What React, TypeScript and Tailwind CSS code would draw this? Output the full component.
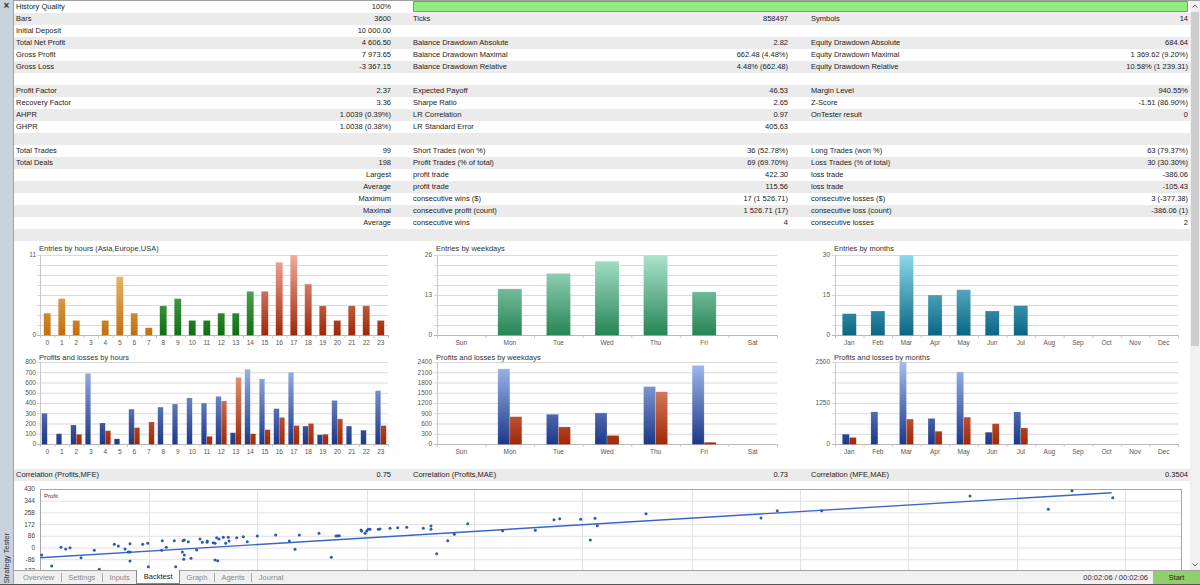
import React from "react";

const FONT = "'Liberation Sans', Arial, sans-serif";

type Row = [string, string, string, string, string, string];
const rows: Row[] = [
  ["Bars", "3600", "Ticks", "858497", "Symbols", "14"],
  ["Initial Deposit", "10 000.00", "", "", "", ""],
  ["Total Net Profit", "4 606.50", "Balance Drawdown Absolute", "2.82", "Equity Drawdown Absolute", "684.64"],
  ["Gross Profit", "7 973.65", "Balance Drawdown Maximal", "662.48 (4.48%)", "Equity Drawdown Maximal", "1 369.62 (9.20%)"],
  ["Gross Loss", "-3 367.15", "Balance Drawdown Relative", "4.48% (662.48)", "Equity Drawdown Relative", "10.58% (1 239.31)"],
  ["", "", "", "", "", ""],
  ["Profit Factor", "2.37", "Expected Payoff", "46.53", "Margin Level", "940.55%"],
  ["Recovery Factor", "3.36", "Sharpe Ratio", "2.65", "Z-Score", "-1.51 (86.90%)"],
  ["AHPR", "1.0039 (0.39%)", "LR Correlation", "0.97", "OnTester result", "0"],
  ["GHPR", "1.0038 (0.38%)", "LR Standard Error", "405.63", "", ""],
  ["", "", "", "", "", ""],
  ["Total Trades", "99", "Short Trades (won %)", "36 (52.78%)", "Long Trades (won %)", "63 (79.37%)"],
  ["Total Deals", "198", "Profit Trades (% of total)", "69 (69.70%)", "Loss Trades (% of total)", "30 (30.30%)"],
  ["", "Largest", "profit trade", "422.30", "loss trade", "-386.06"],
  ["", "Average", "profit trade", "115.56", "loss trade", "-105.43"],
  ["", "Maximum", "consecutive wins ($)", "17 (1 526.71)", "consecutive losses ($)", "3 (-377.38)"],
  ["", "Maximal", "consecutive profit (count)", "1 526.71 (17)", "consecutive loss (count)", "-386.06 (1)"],
  ["", "Average", "consecutive wins", "4", "consecutive losses", "2"],
  ["", "", "", "", "", ""],
];

function Cell({ a, b }: { a: string; b: string }) {
  return (
    <div className="flex justify-between whitespace-nowrap">
      <span>{a}</span>
      <span>{b}</span>
    </div>
  );
}

function DataRow({ r, gray }: { r: Row; gray: boolean }) {
  return (
    <div
      className={`grid grid-cols-[375px_22px_375px_23px_377px] pl-[2px] h-[12px] leading-[12px] text-[7.5px] ${
        gray ? "bg-[#ebebeb]" : "bg-white"
      }`}
    >
      <Cell a={r[0]} b={r[1]} />
      <div />
      <Cell a={r[2]} b={r[3]} />
      <div />
      <Cell a={r[4]} b={r[5]} />
    </div>
  );
}

type Grad = { id: string; top: string; bot: string };

interface ChartProps {
  w: number;
  h: number;
  title: string;
  ty: number;
  l: number;
  r: number;
  t: number;
  b: number;
  max: number;
  lx: number;
  yLabels: [string, number][];
  cats: string[];
  series: number[][];
  bw: number;
  grads: Grad[];
  fill: (s: number, i: number) => string;
}

function Chart(p: ChartProps) {
  const cw = (p.r - p.l) / p.cats.length;
  const y = (v: number) => p.b - (v / p.max) * (p.b - p.t);
  const grid = Array.from({ length: 9 }, (_, k) => p.t + (k * (p.b - p.t)) / 8);
  return (
    <svg width={p.w} height={p.h} className="block" style={{ fontFamily: FONT }}>
      <defs>
        {p.grads.map((g) => (
          <linearGradient key={g.id} id={g.id} gradientUnits="userSpaceOnUse" x1="0" y1={p.t} x2="0" y2={p.b}>
            <stop offset="0" stopColor={g.top} />
            <stop offset="1" stopColor={g.bot} />
          </linearGradient>
        ))}
      </defs>
      <text x={p.l - 1} y={p.ty} fontSize="7.5" fill="#333">
        {p.title}
      </text>
      {grid.map((gy, k) => (
        <line key={k} x1={p.l - 3} x2={p.r} y1={gy + 0.5} y2={gy + 0.5} stroke={k === 8 ? "#b8b8b8" : "#d9d9d9"} strokeWidth="1" />
      ))}
      <line x1={p.l + 0.5} x2={p.l + 0.5} y1={p.t} y2={p.b + 3} stroke="#c8c8c8" />
      {p.cats.map((_, i) => (
        <line key={i} x1={p.l + cw * (i + 1) + 0.5} x2={p.l + cw * (i + 1) + 0.5} y1={p.b} y2={p.b + 3} stroke="#c8c8c8" />
      ))}
      {p.yLabels.map(([s, v]) => (
        <text key={s} x={p.lx} y={y(v) + 2.4} fontSize="6.5" fill="#555" textAnchor="end">
          {s}
        </text>
      ))}
      {p.cats.map((c, i) => (
        <text key={c} x={p.l + cw * (i + 0.5)} y={p.b + 10} fontSize="6.5" fill="#555" textAnchor="middle">
          {c}
        </text>
      ))}
      {p.series.map((vals, s) =>
        vals.map((v, i) => {
          if (v <= 0) return null;
          const c = p.l + cw * (i + 0.5);
          const x = p.series.length === 1 ? c - p.bw / 2 : s === 0 ? c - p.bw : c;
          const top = y(v);
          return (
            <rect
              key={`${s}-${i}`}
              x={x}
              y={top}
              width={p.bw}
              height={p.b - top + 0.5}
              fill={`url(#${p.fill(s, i)})`}
              stroke="rgba(255,255,255,0.35)"
              strokeWidth="0.5"
            />
          );
        })
      )}
    </svg>
  );
}

const hours = Array.from({ length: 24 }, (_, i) => String(i));
const days = ["Sun", "Mon", "Tue", "Wed", "Thu", "Fri", "Sat"];
const months = ["Jan", "Feb", "Mar", "Apr", "May", "Jun", "Jul", "Aug", "Sep", "Oct", "Nov", "Dec"];

const blue = (id: string): Grad => ({ id, top: "#a4bcee", bot: "#1c3888" });
const red = (id: string): Grad => ({ id, top: "#f2a688", bot: "#a02808" });

const pts: [number, number][] = [
  [41.7, 555], [51.7, 566], [61, 547.3], [65.7, 549], [70, 547.7], [81, 557.7], [94.3, 550.3], [99.3, 569.3],
  [114.3, 544.3], [118.3, 546], [125, 549], [128.3, 552], [130, 543.7], [130, 552], [130, 561], [142.7, 544.3],
  [147.7, 543.3], [148.3, 566.7], [161.7, 550.3], [162.3, 540.7], [166.3, 547.3], [174.3, 540.7], [175.7, 566.7],
  [182.3, 552], [183, 540.7], [184.3, 540], [184.3, 555], [183.7, 559.3], [188.3, 541.7], [191, 558.3],
  [196.7, 550], [200, 539], [202.3, 542.3], [207, 542.3], [207.3, 541], [213.3, 542.7], [215, 543.3], [215, 560],
  [217.7, 560.7], [216.7, 537.7], [219, 539], [223.3, 537.3], [225.7, 543.3], [228.3, 537.3], [229, 541],
  [236.7, 537.7], [243.3, 536.7], [247.3, 541.7], [257.3, 536], [275.7, 535], [289.3, 541], [295, 549.3],
  [299.3, 535], [319, 533.3], [331.3, 557.3], [336, 536], [337.7, 535.7], [339.3, 535.7], [361, 530],
  [361.7, 531], [365, 533.3], [366.7, 531], [368.3, 529.3], [370, 529.3], [378.3, 529.3], [380, 529],
  [390, 528.3], [397.7, 527.7], [406.7, 527.3], [423.3, 528.3], [431, 526], [431, 529.3], [436.7, 553.7],
  [447.7, 540.7], [454.3, 534.3], [467.7, 523.7], [502.7, 530.7], [535.3, 530.3], [554, 519.7], [559.7, 518.7],
  [580.7, 519.3], [590.3, 540], [595, 518.3], [597.3, 525.7], [646, 513.7], [761, 518], [777.3, 510.7],
  [821.7, 510.7], [970, 496], [1048.3, 509.3], [1072, 490.7], [1112.7, 497.7],
];

function Scatter() {
  const ox = 14;
  const oy = 481;
  const top = 8;
  const step = 11.7;
  const labels = ["430", "344", "258", "172", "86", "0", "-86", "-172"];
  const vlines = [149, 257, 367, 474, 582, 692, 800, 908, 1017, 1125];
  return (
    <svg width={1176} height={89} className="block" style={{ fontFamily: FONT }}>
      {labels.map((s, k) => (
        <line key={`h${k}`} x1={26} x2={1168} y1={top + k * step + 0.5} y2={top + k * step + 0.5} stroke="#e2e2e2" />
      ))}
      {vlines.map((x) => (
        <line key={`v${x}`} x1={x - ox + 0.5} x2={x - ox + 0.5} y1={top} y2={100} stroke="#e2e2e2" />
      ))}
      <rect x={26.5} y={top + 0.5} width={1141} height={100} fill="none" stroke="#a8a8a8" />
      {labels.map((s, k) => (
        <text key={s} x={21} y={top + k * step + 2.4} fontSize="6.5" fill="#444" textAnchor="end">
          {s}
        </text>
      ))}
      <text x={30} y={16.5} fontSize="6" fill="#333">
        Profit
      </text>
      <line x1={26} y1={557.7 - oy} x2={1111.7 - ox} y2={492.7 - oy} stroke="#3a66c8" strokeWidth="1.4" />
      {pts.map(([x, yy], i) => (
        <circle key={i} cx={x - ox} cy={yy - oy} r={1.5} fill="#2c58b8" />
      ))}
    </svg>
  );
}

function Tab({ children }: { children: React.ReactNode }) {
  return <span className="px-[6.5px] text-[#8a8a8a]">{children}</span>;
}
function Sep() {
  return <span className="w-px h-[9px] bg-[#a8a8a8]" />;
}

export default function App() {
  return (
    <div
      className="w-[1200px] h-[585px] flex flex-col border-b border-[#555] overflow-hidden bg-white text-[#222]"
      style={{ fontFamily: FONT }}
    >
      <div className="flex flex-1 min-h-0">
        {/* left strip */}
        <div className="w-[14px] h-full bg-[#c9d3de] border-r border-[#95a3b3] flex flex-col items-center justify-between">
          <span className="text-[10px] leading-[12px] font-bold text-[#333]">×</span>
          <span className="[writing-mode:vertical-rl] rotate-180 text-[7.5px] leading-[12px] text-[#333] mb-[1px] whitespace-nowrap">
            Strategy Tester
          </span>
        </div>

        <div className="flex flex-col w-[1186px]">
          <div className="flex h-[570px] border-t border-[#a0a0a0]">
            <div className="w-[1176px] overflow-hidden flex flex-col">
              {/* row 0 */}
              <div className="grid grid-cols-[375px_22px_775px] pl-[2px] h-[12px] leading-[12px] text-[7.5px] bg-white">
                <Cell a="History Quality" b="100%" />
                <div />
                <div className="h-[11px] bg-[#90ee80] border border-[#7d9d78]" />
              </div>
              {rows.map((r, i) => (
                <DataRow key={i} r={r} gray={i % 2 === 0} />
              ))}

              {/* charts */}
              <div className="grid grid-cols-[386px_395px_395px] grid-rows-[109px_119px] h-[228px] bg-white">
                <Chart
                  w={386}
                  h={109}
                  title="Entries by hours (Asia,Europe,USA)"
                  ty={10}
                  l={26}
                  r={374}
                  t={14}
                  b={94}
                  max={11}
                  lx={22}
                  yLabels={[["11", 11], ["0", 0]]}
                  cats={hours}
                  series={[[3, 5, 2, 0, 2, 8, 3, 1, 4, 5, 2, 2, 3, 3, 6, 6, 10, 11, 7, 4, 2, 4, 4, 2]]}
                  bw={7}
                  grads={[
                    { id: "eo", top: "#f8cc86", bot: "#c07010" },
                    { id: "eg", top: "#7fcc7f", bot: "#0f6e12" },
                    { id: "er", top: "#f4aa9a", bot: "#a02808" },
                  ]}
                  fill={(_, i) => (i < 8 ? "eo" : i < 15 ? "eg" : "er")}
                />
                <Chart
                  w={395}
                  h={109}
                  title="Entries by weekdays"
                  ty={10}
                  l={37}
                  r={377}
                  t={14}
                  b={94}
                  max={26}
                  lx={32}
                  yLabels={[["26", 26], ["13", 13], ["0", 0]]}
                  cats={days}
                  series={[[0, 15, 20, 24, 26, 14, 0]]}
                  bw={24}
                  grads={[{ id: "wg", top: "#acE4cc", bot: "#278555" }]}
                  fill={() => "wg"}
                />
                <Chart
                  w={395}
                  h={109}
                  title="Entries by months"
                  ty={10}
                  l={40}
                  r={383}
                  t={14}
                  b={94}
                  max={30}
                  lx={35}
                  yLabels={[["30", 30], ["15", 15], ["0", 0]]}
                  cats={months}
                  series={[[8, 9, 30, 15, 17, 9, 11, 0, 0, 0, 0, 0]]}
                  bw={14}
                  grads={[{ id: "mt", top: "#8cd8ea", bot: "#0a6684" }]}
                  fill={() => "mt"}
                />
                <Chart
                  w={386}
                  h={119}
                  title="Profits and losses by hours"
                  ty={9.5}
                  l={26}
                  r={374}
                  t={12}
                  b={94}
                  max={800}
                  lx={22}
                  yLabels={["800", "700", "600", "500", "400", "300", "200", "100", "0"].map((s) => [s, Number(s)] as [string, number])}
                  cats={hours}
                  series={[
                    [300, 100, 185, 690, 205, 50, 340, 0, 360, 390, 450, 400, 465, 110, 730, 635, 345, 700, 175, 90, 425, 175, 135, 520],
                    [0, 0, 95, 0, 130, 0, 160, 215, 0, 0, 0, 75, 420, 650, 100, 140, 260, 180, 200, 95, 245, 0, 0, 180],
                  ]}
                  bw={5.5}
                  grads={[blue("hb"), red("hr")]}
                  fill={(s) => (s === 0 ? "hb" : "hr")}
                />
                <Chart
                  w={395}
                  h={119}
                  title="Profits and losses by weekdays"
                  ty={9.5}
                  l={37}
                  r={377}
                  t={12}
                  b={94}
                  max={2400}
                  lx={32}
                  yLabels={["2400", "2100", "1800", "1500", "1200", "900", "600", "300", "0"].map((s) => [s, Number(s)] as [string, number])}
                  cats={days}
                  series={[
                    [0, 2200, 870, 910, 1680, 2300, 0],
                    [0, 800, 500, 250, 1530, 50, 0],
                  ]}
                  bw={12}
                  grads={[blue("wb"), red("wr")]}
                  fill={(s) => (s === 0 ? "wb" : "wr")}
                />
                <Chart
                  w={395}
                  h={119}
                  title="Profits and losses by months"
                  ty={9.5}
                  l={40}
                  r={383}
                  t={12}
                  b={94}
                  max={2500}
                  lx={35}
                  yLabels={[["2500", 2500], ["1250", 1250], ["0", 0]]}
                  cats={months}
                  series={[
                    [300, 980, 2500, 780, 2200, 360, 980, 0, 0, 0, 0, 0],
                    [200, 0, 760, 390, 820, 620, 490, 0, 0, 0, 0, 0],
                  ]}
                  bw={7}
                  grads={[blue("mb"), red("mr")]}
                  fill={(s) => (s === 0 ? "mb" : "mr")}
                />
              </div>

              <DataRow
                r={["Correlation (Profits,MFE)", "0.75", "Correlation (Profits,MAE)", "0.73", "Correlation (MFE,MAE)", "0.3504"]}
                gray
              />
              <Scatter />
            </div>

            {/* scrollbar */}
            <div className="w-[10px] bg-[#f0f0f0] flex flex-col items-center">
              <svg width="10" height="10" className="block">
                <path d="M2.5 6.5 L5 4 L7.5 6.5" fill="none" stroke="#606060" strokeWidth="1" />
              </svg>
              <div className="w-[8px] h-[334px] mt-[1px] bg-[#cdcdcd]" />
              <div className="flex-1" />
              <svg width="10" height="10" className="block">
                <path d="M2.5 3.5 L5 6 L7.5 3.5" fill="none" stroke="#606060" strokeWidth="1" />
              </svg>
            </div>
          </div>

          {/* tab bar */}
          <div className="h-[14px] flex items-center bg-[#f0f0f0] border-t border-[#a0a0a0] text-[7.5px] leading-[12px]">
            <div className="flex items-center h-full pl-[2.5px]">
              <Tab>Overview</Tab>
              <Sep />
              <Tab>Settings</Tab>
              <Sep />
              <Tab>Inputs</Tab>
              <span className="self-start -mt-px h-[14px] px-[6.5px] bg-white border-x border-b border-[#8a8a8a] text-[#222] leading-[13px]">
                Backtest
              </span>
              <Tab>Graph</Tab>
              <Sep />
              <Tab>Agents</Tab>
              <Sep />
              <Tab>Journal</Tab>
            </div>
            <div className="flex-1" />
            <span className="text-[#333] mr-[5px]">00:02:06 / 00:02:06</span>
            <span className="w-[47px] h-full bg-[#8ed06c] text-center text-[#222] leading-[13px]">Start</span>
          </div>
        </div>
      </div>
    </div>
  );
}
